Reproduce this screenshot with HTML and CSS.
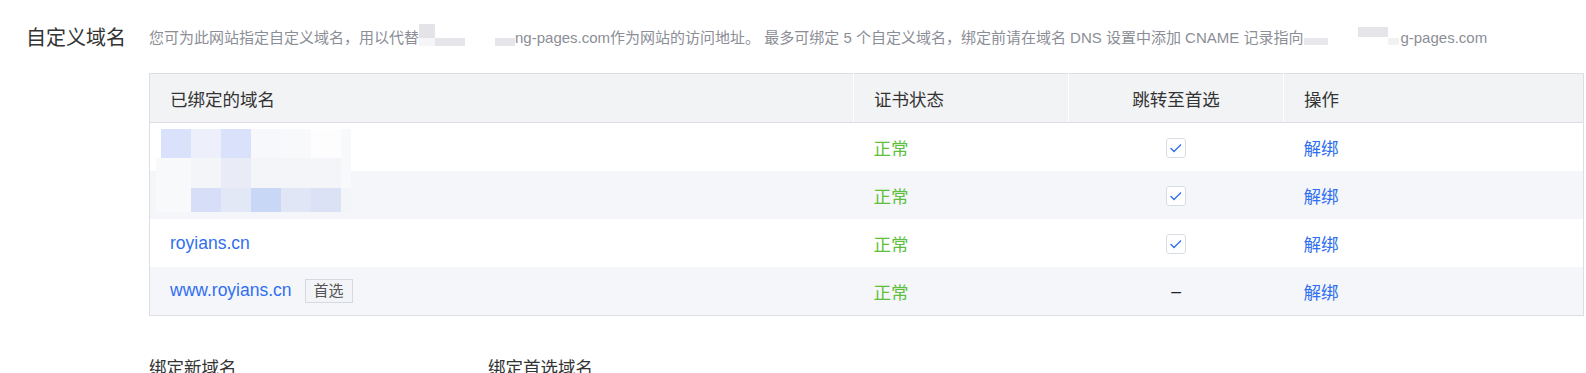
FILE: index.html
```html
<!DOCTYPE html>
<html lang="zh-CN">
<head>
    <meta charset="UTF-8">
    <meta name="viewport" content="width=device-width, initial-scale=1.0">
    <title>自定义域名</title>
    <link rel="stylesheet" href="styles.css">
</head>
<body>
    <div class="section">
        <div class="section-title">自定义域名</div>
        <div class="section-body">
            <p class="desc">您可为此网站指定自定义域名，用以代替<span class="redact redact-a"></span>ng-pages.com作为网站的访问地址。 最多可绑定 5 个自定义域名，绑定前请在域名 DNS 设置中添加 CNAME 记录指向<span class="redact redact-b"></span>g-pages.com</p>

            <div class="table-wrap">
                <table class="domain-table">
                    <colgroup>
                        <col class="col-domain">
                        <col class="col-cert">
                        <col class="col-redirect">
                        <col class="col-action">
                    </colgroup>
                    <thead>
                        <tr>
                            <th>已绑定的域名</th>
                            <th>证书状态</th>
                            <th class="center">跳转至首选</th>
                            <th>操作</th>
                        </tr>
                    </thead>
                    <tbody>
                        <tr>
                            <td></td>
                            <td class="ok">正常</td>
                            <td class="center"><span class="check"><svg width="20" height="20" viewBox="0 0 20 20"><polyline points="4.5,10 8,13.5 15,6.5" fill="none" stroke="#2f6ff0" stroke-width="1.3"/></svg></span></td>
                            <td><a class="link" href="#">解绑</a></td>
                        </tr>
                        <tr>
                            <td></td>
                            <td class="ok">正常</td>
                            <td class="center"><span class="check"><svg width="20" height="20" viewBox="0 0 20 20"><polyline points="4.5,10 8,13.5 15,6.5" fill="none" stroke="#2f6ff0" stroke-width="1.3"/></svg></span></td>
                            <td><a class="link" href="#">解绑</a></td>
                        </tr>
                        <tr>
                            <td><a class="link" href="#">royians.cn</a></td>
                            <td class="ok">正常</td>
                            <td class="center"><span class="check"><svg width="20" height="20" viewBox="0 0 20 20"><polyline points="4.5,10 8,13.5 15,6.5" fill="none" stroke="#2f6ff0" stroke-width="1.3"/></svg></span></td>
                            <td><a class="link" href="#">解绑</a></td>
                        </tr>
                        <tr>
                            <td><a class="link" href="#">www.royians.cn</a><span class="tag">首选</span></td>
                            <td class="ok">正常</td>
                            <td class="center dash">–</td>
                            <td><a class="link" href="#">解绑</a></td>
                        </tr>
                    </tbody>
                </table>

                <!-- mosaic over the first two domains -->
                <div class="mosaic">
                    <i></i><i class="m1"></i><i class="m2"></i><i class="m1"></i><i class="m3"></i><i class="m4"></i><i class="m5"></i><i class="m4"></i>
                    <i class="m4"></i><i class="m4"></i><i class="m6"></i><i class="m7"></i><i class="m6"></i><i class="m6"></i><i class="m6"></i><i class="m4"></i>
                    <i class="m4"></i><i class="m4"></i><i class="m8"></i><i class="m9"></i><i class="m10"></i><i class="m11"></i><i class="m12"></i><i class="m6"></i>
                </div>
            </div>

            <div class="bind-row">
                <div class="bind-col">绑定新域名</div>
                <div class="bind-col">绑定首选域名</div>
            </div>
        </div>
    </div>
</body>
</html>
```
FILE: styles.css
```css
body {
    margin: 0;
    background-color: #fff;
    font-family: "Liberation Sans", "Noto Sans CJK SC", sans-serif;
    color: #333;
}
.section {
    display: flex;
    padding: 24px 0 0 26px;
}
.section-title {
    width: 123px;
    flex-shrink: 0;
    font-size: 20px;
    line-height: 28px;
    color: #333;
}
.section-body {
    width: 1435px;
}
.desc {
    margin: 0;
    font-size: 15px;
    line-height: 28px;
    color: #8b8e96;
    white-space: nowrap;
}
.redact {
    display: inline-block;
    vertical-align: top;
    height: 22px;
    background-repeat: no-repeat;
}
.redact-a {
    width: 96px;
    background-image:
        linear-gradient(#e3e3e8, #e3e3e8),
        linear-gradient(#e6e6ea, #e6e6ea),
        linear-gradient(#e6e6ea, #e6e6ea),
        linear-gradient(#f6f6f8, #f6f6f8);
    background-size: 16px 14px, 30px 8px, 20px 8px, 16px 8px;
    background-position: 0 0, 16px 14px, 76px 14px, 0 14px;
}
.redact-b {
    width: 97px;
    background-image:
        linear-gradient(#e8e8ec, #e8e8ec),
        linear-gradient(#e5e5e9, #e5e5e9),
        linear-gradient(#f2f2f4, #f2f2f4);
    background-size: 24px 7px, 30px 10px, 11px 7px;
    background-position: 1px 14px, 55px 3px, 85px 14px;
}

.table-wrap {
    position: relative;
    margin-top: 21px;
}
.domain-table {
    width: 100%;
    border-collapse: collapse;
    border: 1px solid #dcdee3;
    table-layout: fixed;
    font-size: 17.5px;
}
.col-domain { width: 704px; }
.col-cert { width: 215px; }
.col-redirect { width: 215px; }
.domain-table th {
    height: 48px;
    padding: 0 20px;
    background-color: #f2f3f5;
    border-bottom: 1px solid #dcdee3;
    border-left: 1px solid #fff;
    font-weight: normal;
    text-align: left;
    color: #333;
}
.domain-table th:first-child {
    border-left: none;
}
.domain-table td {
    height: 48px;
    padding: 0 20px;
    white-space: nowrap;
}
.domain-table tbody tr:nth-child(even) td {
    background-color: #f5f6fa;
}
.domain-table .center {
    text-align: center;
}
.ok {
    color: #5dbf3d;
}
.dash {
    color: #1d2129;
}
.link {
    color: #2f6ff0;
    text-decoration: none;
}
.tag {
    display: inline-block;
    margin-left: 13px;
    padding: 0 8px;
    height: 22px;
    line-height: 22px;
    border: 1px solid #d6d9df;
    background-color: #f3f4f7;
    font-size: 15px;
    color: #555;
    vertical-align: middle;
}
.check {
    display: inline-block;
    width: 18px;
    height: 18px;
    border: 1px solid #d8dce4;
    border-radius: 3px;
    background-color: #fff;
    vertical-align: middle;
}
.check svg {
    display: block;
    margin: -1px;
}

.mosaic {
    position: absolute;
    left: 7px;
    top: 56px;
    display: grid;
    grid-template-columns: 5px 30px 30px 30px 30px 30px 30px 10px;
    grid-template-rows: 29px 30px 24px;
}
.mosaic .m1 { background-color: #dae2fb; }
.mosaic .m2 { background-color: #edf0fb; }
.mosaic .m3 { background-color: #f7f8fc; }
.mosaic .m4 { background-color: #f8f9fb; }
.mosaic .m5 { background-color: #fdfdfe; }
.mosaic .m6 { background-color: #f4f5f9; }
.mosaic .m7 { background-color: #e9ecf7; }
.mosaic .m8 { background-color: #d7dff8; }
.mosaic .m9 { background-color: #e3e8f6; }
.mosaic .m10 { background-color: #c9d7f7; }
.mosaic .m11 { background-color: #e0e6f6; }
.mosaic .m12 { background-color: #dbe2f5; }

.bind-row {
    display: flex;
    margin-top: 40px;
    font-size: 17.5px;
    line-height: 24px;
    color: #333;
}
.bind-col {
    width: 339px;
}
```
